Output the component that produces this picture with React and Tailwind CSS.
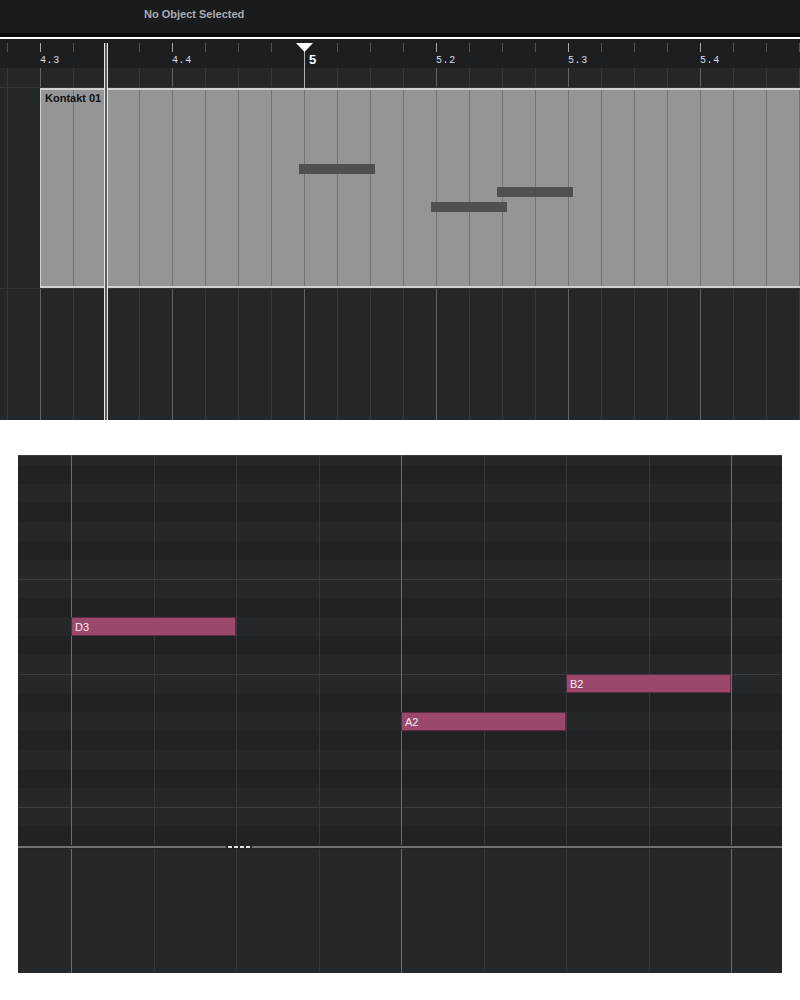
const TOP_LINES = Array.from({ length: 25 }, (_, i) => 7 + 33 * i);
const isBar = (x) => (x - 40) % 132 === 0;

const RULER_LABELS = [
  { x: 40, label: '4.3' },
  { x: 172, label: '4.4' },
  { x: 436, label: '5.2' },
  { x: 568, label: '5.3' },
  { x: 700, label: '5.4' },
];

// part notes, in track-band coords
const REGION_NOTES = [
  { x: 299, y: 76, w: 76 },
  { x: 431, y: 114, w: 76 },
  { x: 497, y: 99, w: 76 },
];

// piano roll rows, top to bottom (first one is cut off)
const PITCHES = ['B3', 'A#3', 'A3', 'G#3', 'G3', 'F#3', 'F3', 'E3', 'D#3', 'D3', 'C#3', 'C3', 'B2', 'A#2', 'A2', 'G#2', 'G2', 'F#2', 'F2', 'E2', 'D#2'];
const PIANO_LINES = Array.from({ length: 9 }, (_, i) => 53 + 82.5 * i);
const NOTES = [
  { pitch: 'D3', x: 53, w: 165 },
  { pitch: 'A2', x: 383, w: 165 },
  { pitch: 'B2', x: 548, w: 165 },
];

function TopGrid() {
  return (
    <div className="absolute inset-0">
      {TOP_LINES.map((x) => (
        <div key={x} className={`absolute top-0 bottom-0 w-px ${isBar(x) ? 'bg-[#606366]' : 'bg-[#36393c]'}`} style={{ left: x }} />
      ))}
    </div>
  );
}

function Ruler() {
  return (
    <div className="relative h-[29px] bg-[#1c1e21] shrink-0">
      {TOP_LINES.map((x) => (
        <div key={x} className={`absolute top-[4px] h-[9px] w-px ${isBar(x) ? 'bg-[#a7a9ab]' : 'bg-[#4f5255]'}`} style={{ left: x }} />
      ))}
      {RULER_LABELS.map((l) => (
        <div key={l.x} className="absolute top-[16px] font-['Liberation_Mono',monospace] text-[10px] leading-[12px] tracking-[0.6px] text-[#d6dde2]" style={{ left: l.x }}>
          {l.label}
        </div>
      ))}
      <div className="absolute left-[309px] top-[14px] text-[13px] leading-[14px] font-bold text-white">5</div>
    </div>
  );
}

function TrackBand() {
  return (
    <div className="relative h-[200px] bg-[#24272a] shrink-0">
      <TopGrid />
      <div className="absolute left-[40px] top-0 bottom-0 right-[-4px] bg-[#949596] border-y-2 border-l border-[#d0d0d0]" />
      {TOP_LINES.filter((x) => x > 41).map((x) => (
        <div key={x} className="absolute top-[2px] bottom-[2px] w-px bg-[#727374]" style={{ left: x }} />
      ))}
      {REGION_NOTES.map((n) => (
        <div key={n.x} className="absolute h-[10px] bg-[#4f5052]" style={{ left: n.x, top: n.y, width: n.w }} />
      ))}
      <div className="absolute left-[45px] top-[4px] text-[11px] leading-[13px] font-bold text-[#111]">Kontakt 01</div>
    </div>
  );
}

function PianoRoll() {
  return (
    <div className="ml-[18px] w-[764px] flex flex-col">
      <div className="relative h-[390px] flex flex-col">
        {PITCHES.map((p, i) => (
          <div
            key={p}
            className={`${i === 0 ? 'h-[10px]' : 'h-[19px]'} ${p.includes('#') ? 'bg-[#212225]' : 'bg-[#25282b]'} ${p.startsWith('E') || p.startsWith('B') ? 'border-t border-[#3a3d40]' : ''}`}
          />
        ))}
        {PIANO_LINES.map((x, i) => (
          <div key={x} className={`absolute top-0 bottom-0 w-px ${i % 4 === 0 ? 'bg-[#6a6c6f]' : 'bg-[#36393c]'}`} style={{ left: Math.round(x) }} />
        ))}
        {NOTES.map((n) => (
          <div
            key={n.pitch}
            className="absolute h-[19px] bg-[#9c486d] border border-[#5c2a42] pl-[3px] text-[11px] leading-[18px] text-[#f7eef3]"
            style={{ left: n.x, width: n.w, top: PITCHES.indexOf(n.pitch) * 19 - 9 }}
          >
            {n.pitch}
          </div>
        ))}
      </div>
      <div className="h-[4px] bg-[#222528] flex items-center">
        <div className="w-[208px] h-[2px] bg-[#6e7073]" />
        <div className="flex gap-[2px] px-[2px]">
          <div className="w-[4px] h-[2px] bg-[#e2e2e2]" />
          <div className="w-[4px] h-[2px] bg-[#e2e2e2]" />
          <div className="w-[4px] h-[2px] bg-[#e2e2e2]" />
          <div className="w-[4px] h-[2px] bg-[#e2e2e2]" />
        </div>
        <div className="flex-1 h-[2px] bg-[#6e7073]" />
      </div>
      <div className="relative h-[124px] bg-[#25282b]">
        {PIANO_LINES.map((x, i) => (
          <div key={x} className={`absolute top-0 bottom-0 w-px ${i % 4 === 0 ? 'bg-[#6a6c6f]' : 'bg-[#36393c]'}`} style={{ left: Math.round(x) }} />
        ))}
      </div>
    </div>
  );
}

export default function App() {
  return (
    <div className="w-[800px] h-[1000px] bg-white font-['Liberation_Sans',Arial,sans-serif]">
      <div className="relative h-[420px] flex flex-col overflow-hidden">
        <div className="h-[33px] shrink-0 bg-[#1a1b1d] pl-[144px] pb-[4px] flex items-center text-[11px] font-bold text-[#a9adb1]">
          No Object Selected
        </div>
        <div className="h-[4px] shrink-0 bg-[#0b0b0c]" />
        <div className="h-[2px] shrink-0 bg-white" />
        <Ruler />
        <div className="relative h-[20px] shrink-0 bg-[#24272a] border-b border-[#35383b]">
          <TopGrid />
        </div>
        <TrackBand />
        <div className="relative flex-1 bg-[#24272a] border-t border-[#303336]">
          <TopGrid />
        </div>

        {/* edit cursor */}
        <div className="absolute left-[104px] top-[43px] bottom-0 w-[4px] border-x border-[#e6e6e6] bg-[#5a5c5e]" />

        {/* playhead */}
        <svg className="absolute left-[296px] top-[43px]" width="17" height="9" viewBox="0 0 17 9">
          <polygon points="0,0 17,0 8.5,9" fill="#ffffff" />
        </svg>
        <div className="absolute left-[304px] top-[52px] h-[36px] w-px bg-[#b0b0b0]" />
      </div>
      <div className="h-[35px]" />
      <PianoRoll />
    </div>
  );
}
